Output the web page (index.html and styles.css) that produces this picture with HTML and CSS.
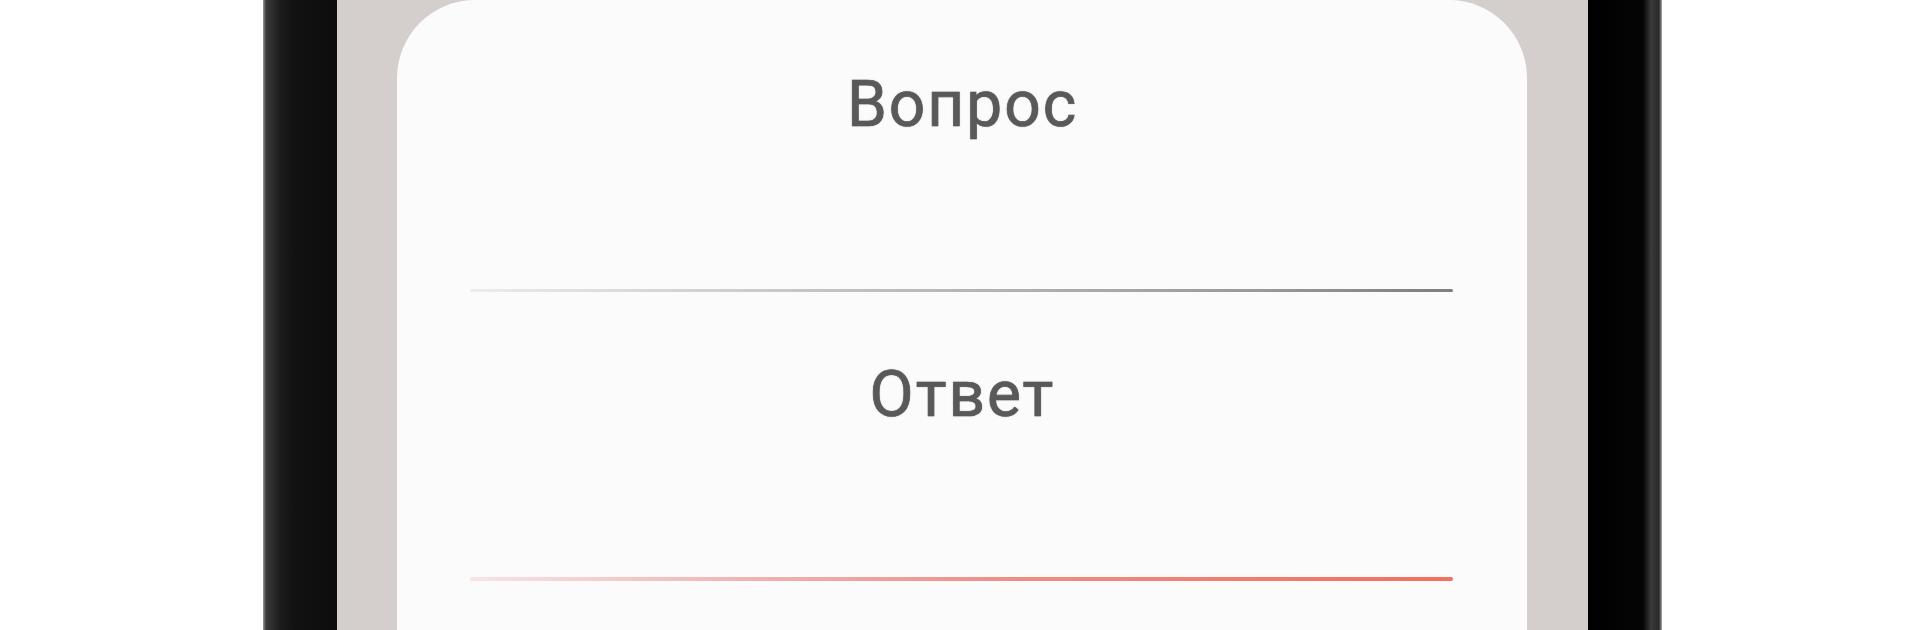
FILE: index.html
```html
<!DOCTYPE html>
<html lang="ru">
<head>
    <meta charset="UTF-8">
    <meta name="viewport" content="width=device-width, initial-scale=1.0">
    <title>Карточки</title>
    <link rel="stylesheet" href="styles.css">
</head>
<body>
    <div class="phone">
        <div class="screen">
            <div class="card">
                <div class="label">Вопрос</div>
                <div class="field">
                    <div class="underline grey"></div>
                </div>
                <div class="label second">Ответ</div>
                <div class="field last">
                    <div class="underline red"></div>
                </div>
            </div>
        </div>
    </div>
</body>
</html>
```

FILE: styles.css
```css
* {
    margin: 0;
    padding: 0;
    box-sizing: border-box;
}

body {
    width: 1920px;
    height: 630px;
    overflow: hidden;
    background: #fff;
    font-family: Roboto, 'Liberation Sans', sans-serif;
}

.phone {
    margin-left: 263px;
    width: 1399px;
    height: 630px;
    padding: 0 74px;
    /* Ramka telefonu z połyskiem na krawędziach */
    background: linear-gradient(to right,
        #9a9a9a 0px, #3c3c3c 3px, #2b2b2b 10px, #1c1c1c 17px, #121212 30px,
        #0c0c0c 74px, #000 1325px, #050505 1380px, #3a3a3a 1388px, #2a2a2a 1396px, #aaa 1399px);
}

.screen {
    height: 100%;
    background: #d4cfcd;
    padding: 0 61px 0 60px;
}

.card {
    height: 100%;
    background: #fbfbfb;
    border-radius: 78px 78px 0 0;
    padding: 68px 74px 0 73px;
}

.label {
    font-size: 64px;
    line-height: 74px;
    letter-spacing: 2px;
    padding-left: 2px;
    color: #595959;
    text-align: center;
    -webkit-text-stroke: 0.7px #595959;
    text-shadow: 0 0 1.5px rgba(80, 80, 80, 0.6);
}

.label.second {
    margin-top: 66px;
}

.field {
    height: 150px;
    display: flex;
    align-items: flex-end;
}

.field.last {
    height: 149px;
}

.underline {
    width: 100%;
    height: 3px;
    border-radius: 2px;
}

.underline.grey {
    background: linear-gradient(to right, #ececec, #c4c4c4 35%, #999 80%, #7e7e7e);
}

.underline.red {
    height: 4px;
    background: linear-gradient(to right, #f8e4e4, #eeb0b0 30%, #ee8e84 55%, #f36f5e);
}
```
